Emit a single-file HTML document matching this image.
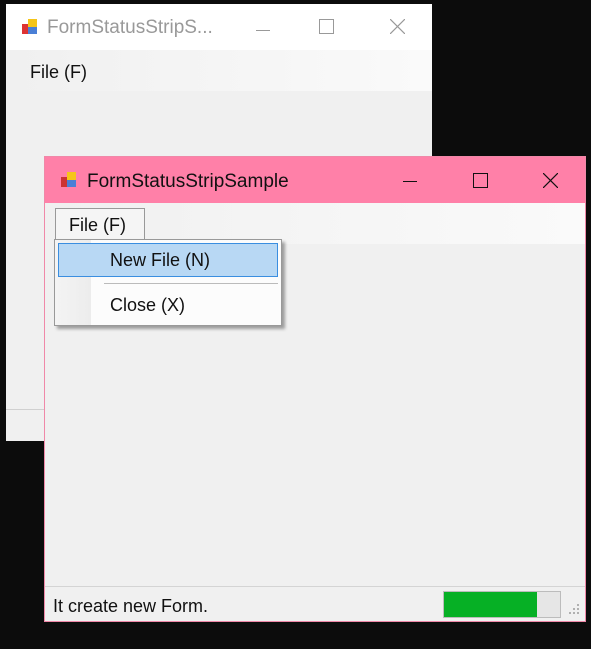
<!DOCTYPE html><html><head><style>
body{margin:0;width:591px;height:649px;background:#0c0c0c;position:relative;overflow:hidden;font-family:"Segoe UI","Liberation Sans",sans-serif;}
.a{position:absolute;}
</style></head><body>
<!-- back window -->
<div class="a" style="left:6px;top:4px;width:426px;height:437px;background:#f0f0f0;">
 <div class="a" style="left:0;top:0;width:426px;height:46px;background:#fff;"></div>
 <div class="a" style="left:14px;top:13px;"><svg width="20" height="20"><rect x="2" y="7" width="6" height="10" fill="#d33"/><rect x="8" y="2" width="9" height="8" fill="#f5c518"/><rect x="8" y="10" width="9" height="7" fill="#4a7fd6"/></svg></div>
 <div class="a" style="left:41px;top:13px;font-size:19px;color:#999;">FormStatusStripS...</div>
 <div class="a" style="left:250px;top:26px;width:14px;height:1px;background:#999;"></div>
 <div class="a" style="left:313px;top:15px;width:13px;height:13px;border:1px solid #999;"></div>
 <svg class="a" style="left:384px;top:15px" width="15" height="15"><path d="M0 0L15 15M15 0L0 15" stroke="#999" stroke-width="1.2"/></svg>
 <div class="a" style="left:0;top:46px;width:426px;height:41px;background:linear-gradient(90deg,#f0f0f0,#fafafa);"></div>
 <div class="a" style="left:24px;top:58px;font-size:18px;color:#111;">File (F)</div>
 <div class="a" style="left:0;top:405px;width:426px;height:1px;background:#d0d0d0;"></div>
</div>
<!-- front window -->
<div class="a" style="left:44px;top:156px;width:540px;height:464px;background:#f0f0f0;border:1px solid #f088a8;">
 <div class="a" style="left:0;top:0;width:540px;height:46px;background:#ff80a8;"></div>
 <div class="a" style="left:14px;top:13px;"><svg width="20" height="20"><rect x="2" y="7" width="6" height="10" fill="#c33"/><rect x="8" y="2" width="9" height="8" fill="#f5c518"/><rect x="8" y="10" width="9" height="7" fill="#4a7fd6"/></svg></div>
 <div class="a" style="left:42px;top:14px;font-size:19px;color:#111;">FormStatusStripSample</div>
 <div class="a" style="left:358px;top:24px;width:14px;height:1px;background:#111;"></div>
 <div class="a" style="left:428px;top:16px;width:13px;height:13px;border:1px solid #111;"></div>
 <svg class="a" style="left:498px;top:16px" width="15" height="15"><path d="M0 0L15 15M15 0L0 15" stroke="#111" stroke-width="1.2"/></svg>
 <div class="a" style="left:0;top:46px;width:540px;height:41px;background:linear-gradient(90deg,#f0f0f0,#fafafa);"></div>
 <div class="a" style="left:10px;top:51px;width:88px;height:33px;border:1px solid #999;border-bottom:none;background:#f5f5f5;"></div>
 <div class="a" style="left:24px;top:58px;font-size:18px;color:#111;">File (F)</div>
 <div class="a" style="left:0;top:429px;width:540px;height:1px;background:#d4d4d4;"></div>
 <div class="a" style="left:8px;top:439px;font-size:18px;color:#111;">It create new Form.</div>
 <div class="a" style="left:398px;top:434px;width:116px;height:25px;border:1px solid #bcbcbc;background:#e6e6e6;"></div>
 <div class="a" style="left:399px;top:435px;width:93px;height:25px;background:#06b025;"></div>
 <svg class="a" style="left:524px;top:447px" width="12" height="12"><g fill="#b0b0b0"><rect x="8" y="0" width="2" height="2"/><rect x="4" y="4" width="2" height="2"/><rect x="8" y="4" width="2" height="2"/><rect x="0" y="8" width="2" height="2"/><rect x="4" y="8" width="2" height="2"/><rect x="8" y="8" width="2" height="2"/></g></svg>
</div>
<!-- dropdown -->
<div class="a" style="left:54px;top:239px;width:226px;height:85px;background:#fcfcfc;border:1px solid #999;box-shadow:3px 3px 3px rgba(0,0,0,.35);">
 <div class="a" style="left:0;top:0;width:36px;height:85px;background:linear-gradient(90deg,#f4f4f4,#ececec);"></div>
 <div class="a" style="left:3px;top:3px;width:218px;height:32px;background:#b8d8f4;border:1px solid #3a8ee0;"></div>
 <div class="a" style="left:55px;top:10px;font-size:18px;color:#111;">New File (N)</div>
 <div class="a" style="left:49px;top:43px;width:174px;height:1px;background:#bbb;"></div>
 <div class="a" style="left:55px;top:55px;font-size:18px;color:#111;">Close (X)</div>
</div>
</body></html>
